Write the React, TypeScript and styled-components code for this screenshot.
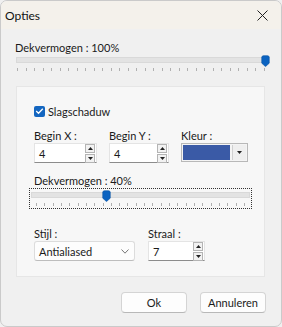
import { FC } from "react";
import styled, { createGlobalStyle } from "styled-components";

const Global = createGlobalStyle`
  html, body {
    margin: 0;
    padding: 0;
    background: #f0f0f0;
  }
  body {
    font-family: Lato, "Open Sans", sans-serif;
    font-size: 11px;
    color: #1a1a1a;
  }
`;

type SliderProps = {
  width: number;
  ticks: number;
  value: number;
  focused?: boolean;
};

const Slider: FC<SliderProps> = ({ width, ticks, value, focused }) => {
  const inset = focused ? 5 : 1;
  const span = width - 2 - (focused ? 1 : 0) * 2 - inset * 2;
  const thumbLeft = (focused ? 1 : 0) + inset + span * value - 4.5;
  return (
    <SliderBox $width={width} $focused={focused}>
      <Track />
      <Thumb style={{ left: thumbLeft }} $top={focused ? 1 : -1}>
        <svg width="9" height="12" viewBox="0 0 9 12">
          <path d="M0.8 2.3 Q0.8 0.8 2.3 0.8 H6.7 Q8.2 0.8 8.2 2.3 V8.2 L4.5 11.6 L0.8 8.2 Z" fill="#0b63c1" stroke="#0a56a8" strokeWidth="0.7" />
        </svg>
      </Thumb>
      <Ticks $inset={inset}>
        {Array.from({ length: ticks + 1 }).map((_, i) => (
          <Tick key={i} />
        ))}
      </Ticks>
    </SliderBox>
  );
};

const Spin: FC<{ value: string; width: number }> = ({ value, width }) => (
  <Edit $width={width}>
    <span>{value}</span>
    <SpinButtons>
      <SpinBtn>
        <svg width="5" height="3" viewBox="0 0 5 3">
          <path d="M0 3 L2.5 0 L5 3 Z" fill="#222" />
        </svg>
      </SpinBtn>
      <SpinBtn>
        <svg width="5" height="3" viewBox="0 0 5 3">
          <path d="M0 0 L2.5 3 L5 0 Z" fill="#222" />
        </svg>
      </SpinBtn>
    </SpinButtons>
  </Edit>
);

const App: FC = () => {
  return (
    <Window>
      <Global />
      <TitleBar>
        <span>Opties</span>
        <svg width="11" height="11" viewBox="0 0 11 11">
          <path d="M0.5 0.5 L10.5 10.5 M10.5 0.5 L0.5 10.5" stroke="#222" strokeWidth="1" />
        </svg>
      </TitleBar>
      <Body>
        <Label>Dekvermogen : 100%</Label>
        <Slider width={252} ticks={29} value={1} />
        <Panel>
          <CheckRow>
            <Check>
              <svg width="9" height="8" viewBox="0 0 9 8">
                <path d="M1.2 4 L3.5 6.3 L7.8 1.7" stroke="#fff" strokeWidth="1.3" fill="none" />
              </svg>
            </Check>
            Slagschaduw
          </CheckRow>
          <FieldRow $top={12}>
            <Field $width={75}>
              <Label>Begin X :</Label>
              <Spin value="4" width={63} />
            </Field>
            <Field $width={72}>
              <Label>Begin Y :</Label>
              <Spin value="4" width={60} />
            </Field>
            <Field $width={68}>
              <Label>Kleur :</Label>
              <ColorCombo>
                <Swatch />
                <DropBtn>
                  <svg width="5" height="3" viewBox="0 0 5 3">
                    <path d="M0 0 L2.5 3 L5 0 Z" fill="#222" />
                  </svg>
                </DropBtn>
              </ColorCombo>
            </Field>
          </FieldRow>
          <SubSlider>
            <Label>Dekvermogen : 40%</Label>
            <Slider width={223} ticks={25} value={0.335} focused />
          </SubSlider>
          <FieldRow $top={18}>
            <Field $width={114}>
              <Label>Stijl :</Label>
              <Select>
                <span>Antialiased</span>
                <svg width="8" height="5" viewBox="0 0 8 5">
                  <path d="M0.5 0.5 L4 4.2 L7.5 0.5" stroke="#666" strokeWidth="0.9" fill="none" />
                </svg>
              </Select>
            </Field>
            <Field $width={60}>
              <Label>Straal :</Label>
              <Spin value="7" width={57} />
            </Field>
          </FieldRow>
        </Panel>
        <Buttons>
          <Button>Ok</Button>
          <Button>Annuleren</Button>
        </Buttons>
      </Body>
    </Window>
  );
};

export default App;

const Window = styled.div`
  width: 282px;
  height: 327px;
  box-sizing: border-box;
  background: #f0f0f0;
  border: 1px solid #cacaca;
  border-radius: 7px;
  overflow: hidden;
  display: flex;
  flex-direction: column;
`;

const TitleBar = styled.div`
  height: 27px;
  flex: none;
  display: flex;
  align-items: center;
  justify-content: space-between;
  padding: 1px 13px 0 4px;
  background: #f4f1eb;
  font-size: 12px;
  color: #111;
`;

const Body = styled.div`
  padding: 12px 14px 0 14px;
  display: flex;
  flex-direction: column;
`;

const Label = styled.div`
  font-size: 11px;
  line-height: 14px;
  white-space: nowrap;
  color: #1a1a1a;
`;

const SliderBox = styled.div<{ $width: number; $focused?: boolean }>`
  position: relative;
  width: ${(p) => p.$width}px;
  box-sizing: border-box;
  padding: ${(p) => (p.$focused ? "3px 1px 2px" : "1px 0 2px")};
  border: 1px dotted ${(p) => (p.$focused ? "#333" : "transparent")};
`;

const Track = styled.div`
  height: 6px;
  box-sizing: border-box;
  background: #e3e3e3;
  border: 1px solid #d9d9d9;
`;

const Thumb = styled.div<{ $top: number }>`
  position: absolute;
  top: ${(p) => p.$top}px;
  line-height: 0;
`;

const Ticks = styled.div<{ $inset: number }>`
  display: flex;
  justify-content: space-between;
  margin-top: 5px;
  padding: 0 ${(p) => p.$inset}px;
`;

const Tick = styled.div`
  width: 1px;
  height: 3px;
  background: #b0b0b0;
`;

const Panel = styled.div`
  margin: 12px 2px 0 1px;
  height: 191px;
  box-sizing: border-box;
  background: #f7f7f7;
  border: 1px solid #e6e6e6;
  padding: 18px 0 0 17px;
  display: flex;
  flex-direction: column;
`;

const CheckRow = styled.label`
  display: flex;
  align-items: center;
  gap: 3px;
  height: 12px;
  font-size: 11px;
`;

const Check = styled.span`
  width: 11px;
  height: 11px;
  border-radius: 2px;
  background: #1466c0;
  display: flex;
  align-items: center;
  justify-content: center;
`;

const FieldRow = styled.div<{ $top: number }>`
  display: flex;
  margin-top: ${(p) => p.$top}px;
`;

const Field = styled.div<{ $width: number }>`
  width: ${(p) => p.$width}px;
  display: flex;
  flex-direction: column;
`;

const Edit = styled.div<{ $width: number }>`
  width: ${(p) => p.$width}px;
  height: 20px;
  box-sizing: border-box;
  background: #fff;
  border: 1px solid #e4e4e4;
  border-bottom: 1px solid #8c8c8c;
  display: flex;
  align-items: center;
  justify-content: space-between;
  padding: 0 1px 0 4px;
  font-size: 11px;
`;

const SpinButtons = styled.div`
  display: flex;
  flex-direction: column;
  gap: 1px;
`;

const SpinBtn = styled.div`
  width: 8px;
  height: 7px;
  border: 1px solid #b4b4b4;
  background: #f2f2f2;
  display: flex;
  align-items: center;
  justify-content: center;
`;

const ColorCombo = styled.div`
  width: 67px;
  height: 19px;
  box-sizing: border-box;
  border: 1px solid #b8b8b8;
  background: #f4f4f4;
  display: flex;
  padding: 1px;
  gap: 2px;
`;

const Swatch = styled.div`
  flex: 1;
  background: #3a5aa6;
`;

const DropBtn = styled.div`
  width: 13px;
  background: #efefef;
  border-left: 1px solid #d0d0d0;
  display: flex;
  align-items: center;
  justify-content: center;
`;

const Select = styled.div`
  width: 101px;
  height: 20px;
  box-sizing: border-box;
  background: #fdfdfd;
  border: 1px solid #dcdcdc;
  border-bottom-color: #bdbdbd;
  border-radius: 3px;
  display: flex;
  align-items: center;
  justify-content: space-between;
  padding: 0 5px 0 4px;
`;

const SubSlider = styled.div`
  margin-top: 11px;
  margin-left: -5px;
  display: flex;
  flex-direction: column;
  & > ${Label} {
    padding-left: 5px;
  }
`;

const Buttons = styled.div`
  display: flex;
  justify-content: flex-end;
  gap: 13px;
  margin-top: 15px;
  padding-right: 1px;
`;

const Button = styled.button`
  width: 66px;
  height: 21px;
  box-sizing: border-box;
  background: #fdfdfd;
  border: 1px solid #d4d4d4;
  border-bottom-color: #b8b8b8;
  border-radius: 4px;
  font-family: Lato, "Open Sans", sans-serif;
  font-size: 11px;
  color: #1a1a1a;
  padding: 0;
`;
